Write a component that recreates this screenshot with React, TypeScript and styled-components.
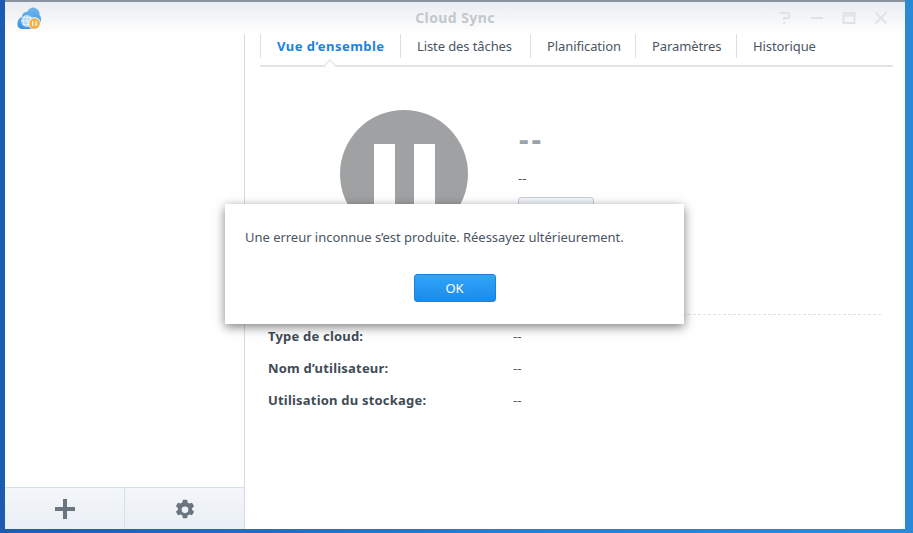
import React from "react";
import styled, { createGlobalStyle } from "styled-components";

const Global = createGlobalStyle`
  html, body { margin: 0; height: 100%; }
  body { font-family: "Noto Sans", "Open Sans", sans-serif; font-size: 13px; color: #4a5663; overflow: hidden; }
  #root { height: 100%; }
`;

const Desktop = styled.div`
  position: relative;
  width: 913px;
  height: 533px;
  box-sizing: border-box;
  padding: 0 8px 4px 5px;
  background: linear-gradient(90deg, #1c5cb0 0%, #2a7fd0 60%, #2a8ad6 100%);
`;

const Window = styled.div`
  height: 100%;
  display: flex;
  flex-direction: column;
  background: #fff;
  border-top: 2px solid #8a939e;
  box-sizing: border-box;
`;

const TitleBar = styled.div`
  position: relative;
  flex: 0 0 32px;
  display: flex;
  align-items: center;
  justify-content: center;
  background: linear-gradient(180deg, #e9ecf1 0%, #ffffff 100%);
`;

const Logo = styled.svg`
  position: absolute;
  left: 11px;
  top: 3px;
`;

const Title = styled.div`
  font-size: 14px;
  font-weight: 700;
  color: #c3c8ce;
  letter-spacing: 0.4px;
  margin-top: -1px;
`;

const Controls = styled.div`
  position: absolute;
  right: 0;
  top: 0;
  display: flex;
  align-items: center;
  height: 32px;
  padding-right: 17px;
  gap: 18px;
`;

const Body = styled.div`
  flex: 1;
  display: flex;
  min-height: 0;
`;

const Sidebar = styled.aside`
  flex: 0 0 239px;
  display: flex;
  flex-direction: column;
  justify-content: flex-end;
  border-right: 1px solid #d9dcdf;
`;

const SideFooter = styled.div`
  height: 41px;
  display: flex;
  background: linear-gradient(180deg, #f3f6fa 0%, #eaeff5 100%);
  border-top: 1px solid #d5e0eb;
`;

const SideButton = styled.div`
  flex: 1;
  display: flex;
  align-items: center;
  justify-content: center;
  & + & { border-left: 1px solid #d5e0eb; }
`;

const Main = styled.main`
  flex: 1;
  min-width: 0;
  padding: 0 12px 0 15px;
`;

const Tabs = styled.nav`
  position: relative;
  display: flex;
  height: 31px;
  border-bottom: 2px solid #e2e4e6;
`;

const Tab = styled.div<{ $active?: boolean; $width: number }>`
  width: ${(p) => p.$width}px;
  height: 24px;
  box-sizing: border-box;
  display: flex;
  align-items: center;
  padding-left: 16px;
  border-left: 1px solid #d5e0eb;
  font-size: 13px;
  font-weight: ${(p) => (p.$active ? 700 : 400)};
  letter-spacing: ${(p) => (p.$active ? "0.45px" : "-0.1px")};
  color: ${(p) => (p.$active ? "#1a82e2" : "#4a5663")};
  &:last-of-type { border-right: 1px solid #d5e0eb; }
`;

const Notch = styled.div`
  position: absolute;
  left: 66px;
  bottom: -2px;
  width: 8px;
  height: 8px;
  box-sizing: border-box;
  background: #fff;
  border-left: 1px solid #dfe2e5;
  border-top: 1px solid #dfe2e5;
  transform: translateY(2px) rotate(45deg);
`;

const Status = styled.section`
  display: flex;
  margin: 0 12px 0 8px;
  padding: 43px 0 0 72px;
  height: 248px;
  box-sizing: border-box;
  border-bottom: 1px dashed #dbe4ec;
`;

const Circle = styled.div`
  width: 128px;
  height: 128px;
  border-radius: 50%;
  background: #a0a1a3;
  display: flex;
  align-items: flex-start;
  justify-content: center;
  gap: 19px;
  padding-top: 34px;
  box-sizing: border-box;
  flex: none;
`;

const Bar = styled.div`
  width: 21px;
  height: 60px;
  background: #fff;
`;

const StatusText = styled.div`
  margin-left: 50px;
  display: flex;
  flex-direction: column;
  align-items: flex-start;
`;

const Heading = styled.div`
  font-size: 30px;
  font-weight: 700;
  line-height: 30px;
  margin: 14px 0 0 1px;
  color: #9aa3ad;
  letter-spacing: 3px;
`;

const SubStatus = styled.div`
  margin-top: 15px;
  line-height: 18px;
  font-size: 13px;
`;

const GhostButton = styled.div`
  margin-top: 10px;
  width: 76px;
  height: 28px;
  box-sizing: border-box;
  border: 1px solid #c6d0db;
  border-radius: 3px;
  background: linear-gradient(180deg, #f3f6fa, #e6ebf1);
`;

const Details = styled.dl`
  margin: 5px 0 0 8px;
  display: grid;
  grid-template-columns: 245px 1fr;
  grid-auto-rows: 32px;
  align-items: center;
`;

const Label = styled.dt`
  font-weight: 700;
  font-size: 13px;
  letter-spacing: 0.2px;
  color: #414b55;
`;

const Value = styled.dd`
  margin: 0;
  font-size: 13px;
`;

const Dialog = styled.div`
  position: absolute;
  left: 225px;
  top: 204px;
  width: 459px;
  height: 120px;
  box-sizing: border-box;
  background: #fff;
  box-shadow: 0 3px 10px rgba(0, 0, 0, 0.5);
  padding: 24px 20px 0;
  display: flex;
  flex-direction: column;
  align-items: center;
`;

const Message = styled.div`
  align-self: flex-start;
  font-size: 13px;
  line-height: 18px;
  letter-spacing: -0.03px;
  color: #4a5663;
`;

const OkButton = styled.button`
  margin-top: 28px;
  width: 82px;
  height: 28px;
  border: 1px solid #1c82d8;
  border-radius: 3px;
  background: linear-gradient(180deg, #2fa5fb 0%, #1c8be8 100%);
  color: #fff;
  font: 400 13px "Noto Sans", sans-serif;
  padding: 0;
`;

export default function App() {
  return (
    <Desktop>
      <Global />
      <Window>
        <TitleBar>
          <Logo width="26" height="26" viewBox="0 0 26 26">
            <defs>
              <linearGradient id="cloudFill" x1="0" y1="0" x2="0" y2="1">
                <stop offset="0" stopColor="#6db5ee" />
                <stop offset="1" stopColor="#3f93dc" />
              </linearGradient>
            </defs>
            <path
              d="M6 24C2 24 1 20 1.500 17.500 2 14 4 12.500 6 12c0-4 3-5.500 5-5 2-4 6-5.500 9-3.500 3 1.500 4 4.500 3.500 6.500 2 2 2 6 .5 9l-4 5z"
              fill="url(#cloudFill)"
            />
            <circle cx="11" cy="16" r="6" fill="#a8d4f5" />
            <path
              d="M5 16h12M11 10v12M6.500 12.500h9M6.500 19.500h9M8.500 10.800q-2.500 5.200 0 10.400M13.500 10.800q2.500 5.200 0 10.400"
              stroke="#e9f5fe"
              strokeWidth="0.8"
              fill="none"
            />
            <circle cx="18.500" cy="18.500" r="6.500" fill="#fff" opacity="0.75" />
            <circle cx="18.500" cy="18.500" r="5.300" fill="#f5b040" />
            <path d="M16.800 16v5M20.200 16v5" stroke="#fff" strokeWidth="1.200" />
          </Logo>
          <Title>Cloud Sync</Title>
          <Controls>
            <svg width="14" height="14" viewBox="0 0 14 14" fill="none" stroke="#e0e3e6" strokeWidth="2">
              <path d="M2 2h9v5H6v2M6 11v2" />
            </svg>
            <svg width="14" height="14" viewBox="0 0 14 14" fill="none" stroke="#e0e3e6" strokeWidth="2">
              <path d="M1 7h12" />
            </svg>
            <svg width="14" height="14" viewBox="0 0 14 14" fill="none" stroke="#e0e3e6" strokeWidth="2">
              <path d="M1.500 2h11v10h-11zM1.500 4.500h11" />
            </svg>
            <svg width="14" height="14" viewBox="0 0 14 14" fill="none" stroke="#e0e3e6" strokeWidth="2">
              <path d="M1.500 1.500l11 11M12.500 1.500l-11 11" />
            </svg>
          </Controls>
        </TitleBar>
        <Body>
          <Sidebar>
            <SideFooter>
              <SideButton>
                <svg width="20" height="20" viewBox="0 0 20 20" fill="#6b7580">
                  <path d="M8 0h4v8h8v4h-8v8H8v-8H0V8h8z" />
                </svg>
              </SideButton>
              <SideButton>
                <svg width="20" height="20" viewBox="0 0 24 24" fill="#6b7580">
                  <path
                    fillRule="evenodd"
                    d="M9.500 0h5l.7 3.300c.7.3 1.400.6 2 1.100l3.200-1 2.500 4.300-2.500 2.300c.1.7.1 1.300 0 2l2.500 2.300-2.500 4.300-3.200-1c-.6.5-1.300.9-2 1.100l-.7 3.300h-5l-.7-3.300c-.7-.3-1.400-.6-2-1.100l-3.200 1L1.100 14.300l2.500-2.300c-.1-.7-.1-1.300 0-2L1.100 7.700l2.500-4.300 3.200 1c.6-.5 1.300-.9 2-1.100zM12 8a4 4 0 1 0 0 8 4 4 0 0 0 0-8z"
                    transform="translate(0 1)"
                  />
                </svg>
              </SideButton>
            </SideFooter>
          </Sidebar>
          <Main>
            <Tabs>
              <Tab $active $width={140}>Vue d’ensemble</Tab>
              <Tab $width={130}>Liste des tâches</Tab>
              <Tab $width={105}>Planification</Tab>
              <Tab $width={101}>Paramètres</Tab>
              <Tab $width={96}>Historique</Tab>
              <Notch />
            </Tabs>
            <Status>
              <Circle>
                <Bar />
                <Bar />
              </Circle>
              <StatusText>
                <Heading>--</Heading>
                <SubStatus>--</SubStatus>
                <GhostButton />
              </StatusText>
            </Status>
            <Details>
              <Label>Type de cloud:</Label>
              <Value>--</Value>
              <Label>Nom d’utilisateur:</Label>
              <Value>--</Value>
              <Label>Utilisation du stockage:</Label>
              <Value>--</Value>
            </Details>
          </Main>
        </Body>
      </Window>
      <Dialog>
        <Message>Une erreur inconnue s’est produite. Réessayez ultérieurement.</Message>
        <OkButton>OK</OkButton>
      </Dialog>
    </Desktop>
  );
}
